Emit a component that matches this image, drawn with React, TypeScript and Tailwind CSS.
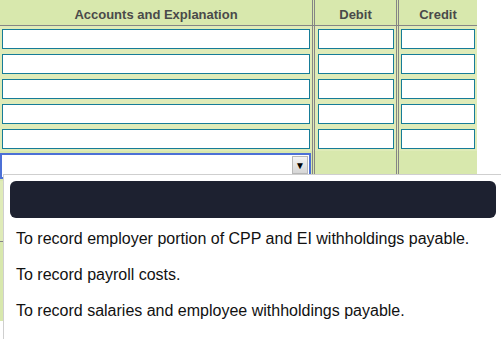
import React from 'react';

const rows = [0, 1, 2, 3, 4];

const options = [
  'To record employer portion of CPP and EI withholdings payable.',
  'To record payroll costs.',
  'To record salaries and employee withholdings payable.',
];

const Cell: React.FC<{ first?: boolean; mid?: boolean; last?: boolean; children?: React.ReactNode }> = ({ first, mid, last, children }) => {
  if (first) return <div className="w-[315px] border-r-[3px] border-double border-[#858585] flex">{children}</div>;
  if (mid) return <div className="w-[81px] flex">{children}</div>;
  if (last) return <div className="w-[81px] border-l-[3px] border-double border-[#858585] flex">{children}</div>;
  return null;
};

export default function App() {
  return (
    <div className="relative w-[501px] h-[339px] overflow-hidden bg-white" style={{ fontFamily: '"Liberation Sans", Arial, sans-serif' }}>
      <div className="w-[477px] bg-[#dfebb8]">
        <div className="flex h-[26px] bg-[#d8e8ad] border-b border-[#858585]">
          <Cell first>
            <div className="w-[312px] text-center text-[13px] font-bold text-[#4a4a4a] pt-[5px]">Accounts and Explanation</div>
          </Cell>
          <Cell mid>
            <div className="w-full text-center text-[13px] font-bold text-[#4a4a4a] pt-[5px]">Debit</div>
          </Cell>
          <Cell last>
            <div className="w-full text-center text-[13px] font-bold text-[#4a4a4a] pt-[5px]">Credit</div>
          </Cell>
        </div>
        {rows.map((r) => (
          <div key={r} className="flex h-[25px]">
            <Cell first>
              <div className="ml-[2px] mt-[3px] w-[308px] h-[20px] bg-white border border-[#167c98]" />
            </Cell>
            <Cell mid>
              <div className="ml-[3px] mt-[3px] w-[76px] h-[20px] bg-white border border-[#167c98]" />
            </Cell>
            <Cell last>
              <div className="ml-[2px] mt-[3px] w-[74px] h-[20px] bg-white border border-[#167c98]" />
            </Cell>
          </div>
        ))}
        <div className="flex h-[30px] bg-[#d8e8ad]">
          <Cell first>
            <div className="mt-[2px] w-[311px] h-[26px] bg-white border-2 border-[#4c70d6] flex justify-end p-[1px]">
              <div className="w-[16px] h-[18px] bg-gradient-to-b from-[#f4f4f4] to-[#d6d6d6] border border-[#b8b8b8] flex items-center justify-center text-[10px] text-black">▼</div>
            </div>
          </Cell>
          <Cell mid />
          <Cell last />
        </div>
        <div className="flex h-[60px]">
          <Cell first>
            <div className="pl-1 pt-[30px] text-[12px] text-[#555]">Totals</div>
          </Cell>
          <Cell mid />
          <Cell last />
        </div>
        <div className="flex h-[80px] bg-[#d8e8ad] border-t border-[#858585]" />
      </div>

      <div className="absolute left-[3px] right-0 top-[174px] bottom-0 bg-white border-t border-l border-[#cfcfcf]">
        <div className="mx-[6px] mt-[6px] h-[37px] w-[486px] rounded-[6px] bg-[#1d2130]" />
        <div className="pt-[3px]">
          {options.map((o) => (
            <div key={o} className="px-[12px] py-2 text-base leading-5 text-[#111]">{o}</div>
          ))}
        </div>
      </div>
    </div>
  );
}
